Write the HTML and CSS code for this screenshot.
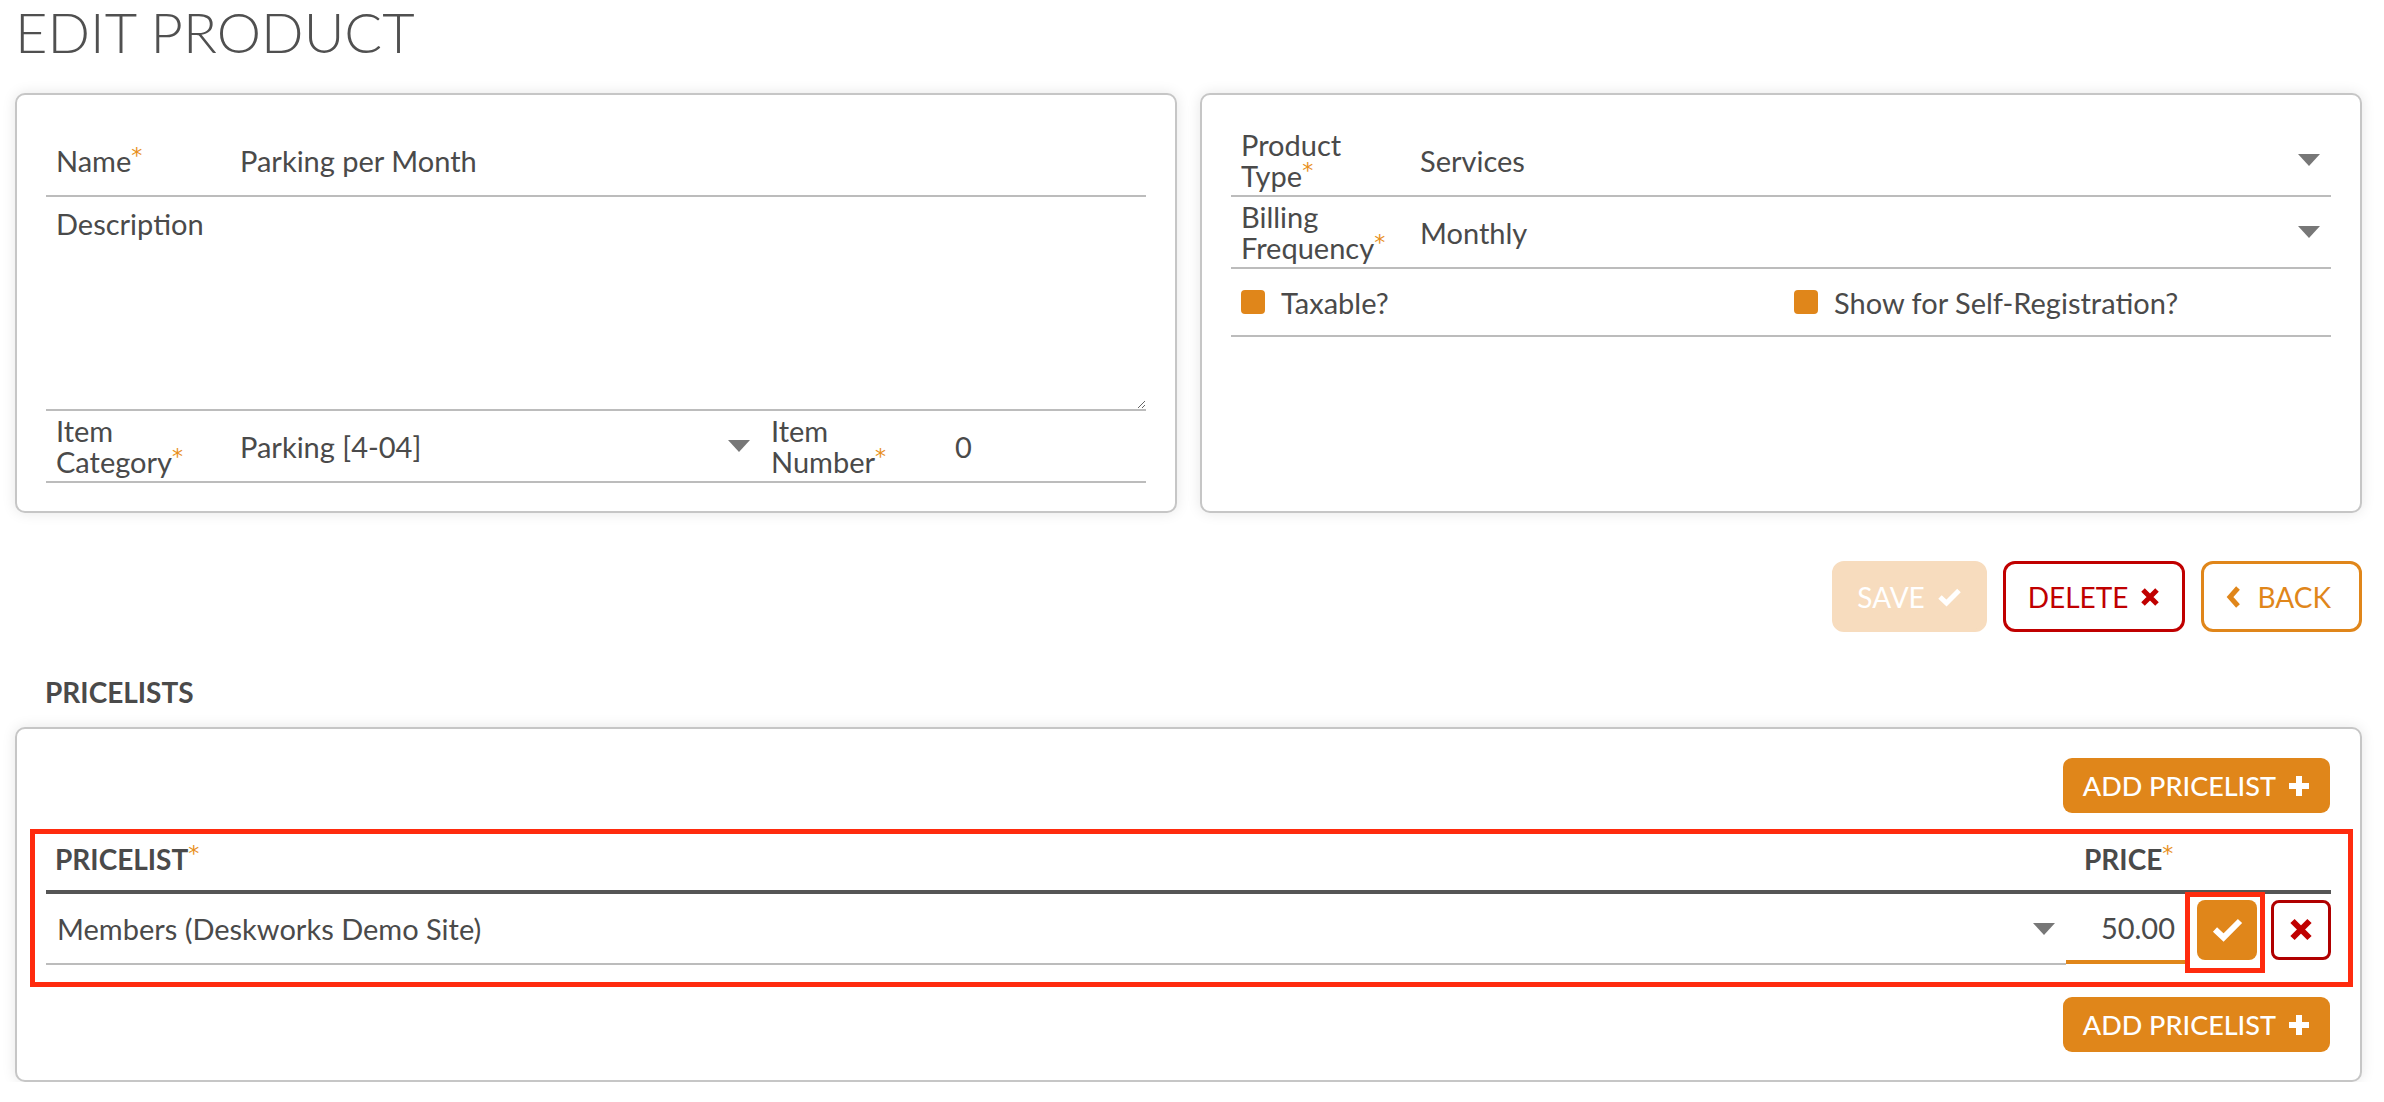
FILE: index.html
```html
<!DOCTYPE html>
<html lang="en">
  <head>
    <meta charset="UTF-8" />
    <meta name="viewport" content="width=device-width, initial-scale=1.0" />
    <title>Edit Product</title>
    <link rel="stylesheet" href="styles.css">
  </head>
  <body>
    <h1 class="page-title">EDIT PRODUCT</h1>

    <div class="top-grid">
      <div class="panel">
        <div class="field-row">
          <label class="field-label">Name<span class="req">*</span></label>
          <div class="field-value">Parking per Month</div>
        </div>
        <div class="field-row field-row-text">
          <label class="field-label">Description</label>
          <textarea class="field-textarea"></textarea>
        </div>
        <div class="field-row">
          <div class="field field-category">
            <label class="field-label">Item<br>Category<span class="req">*</span></label>
            <div class="field-value">Parking [4-04]</div>
            <span class="caret"></span>
          </div>
          <div class="field field-number">
            <label class="field-label">Item<br>Number<span class="req">*</span></label>
            <div class="field-value">0</div>
          </div>
        </div>
      </div>

      <div class="panel panel-side">
        <div class="field-row">
          <label class="field-label">Product<br>Type<span class="req">*</span></label>
          <div class="field-value">Services</div>
          <span class="caret"></span>
        </div>
        <div class="field-row">
          <label class="field-label">Billing<br>Frequency<span class="req">*</span></label>
          <div class="field-value">Monthly</div>
          <span class="caret"></span>
        </div>
        <div class="field-row check-row">
          <label class="check"><span class="check-box"></span>Taxable?</label>
          <label class="check"><span class="check-box"></span>Show for Self-Registration?</label>
        </div>
      </div>
    </div>

    <div class="actions">
      <button class="btn btn-save">SAVE
        <svg width="25" height="20" viewBox="0 0 25 20"><path d="M3 10 L9.5 16 L22 3.5" fill="none" stroke="currentColor" stroke-width="5"/></svg>
      </button>
      <button class="btn btn-delete">DELETE
        <svg width="20" height="20" viewBox="0 0 20 20"><path d="M3 3 L17 17 M17 3 L3 17" fill="none" stroke="currentColor" stroke-width="5"/></svg>
      </button>
      <button class="btn btn-back">
        <svg width="15" height="24" viewBox="0 0 15 24"><path d="M12 3 L4 12 L12 21" fill="none" stroke="currentColor" stroke-width="5"/></svg>
        BACK
      </button>
    </div>

    <h2 class="section-title">PRICELISTS</h2>
    <div class="panel panel-pricelists">
      <div class="toolbar">
        <button class="btn-add">ADD PRICELIST
          <svg width="22" height="22" viewBox="0 0 22 22"><path d="M11 1 V21 M1 11 H21" fill="none" stroke="currentColor" stroke-width="6"/></svg>
        </button>
      </div>

      <div class="highlight">
        <div class="pl-head">
          <div class="pl-head-name">PRICELIST<span class="req">*</span></div>
          <div class="pl-head-price">PRICE<span class="req">*</span></div>
        </div>
        <div class="pl-row">
          <div class="pl-select">Members (Deskworks Demo Site)<span class="caret"></span></div>
          <div class="pl-price">50.00</div>
          <button class="icon-btn icon-btn-ok">
            <svg width="31" height="25" viewBox="0 0 31 25"><path d="M3 12.5 L11.5 20.5 L28 4" fill="none" stroke="currentColor" stroke-width="6"/></svg>
          </button>
          <button class="icon-btn icon-btn-cancel">
            <svg width="24" height="23" viewBox="0 0 24 23"><path d="M3.5 3 L20.5 20 M20.5 3 L3.5 20" fill="none" stroke="currentColor" stroke-width="6"/></svg>
          </button>
        </div>
      </div>

      <div class="toolbar toolbar-bottom">
        <button class="btn-add">ADD PRICELIST
          <svg width="22" height="22" viewBox="0 0 22 22"><path d="M11 1 V21 M1 11 H21" fill="none" stroke="currentColor" stroke-width="6"/></svg>
        </button>
      </div>
    </div>
  </body>
</html>
```

FILE: styles.css
```css
/* Edit product page */
body {
  margin: 0;
  padding: 0 22px 0 15px;
  font-family: Lato, "Open Sans", sans-serif;
  font-size: 29px;
  color: #4a4a4a;
  background: #fff;
}

button {
  font-family: inherit;
  cursor: pointer;
}

.page-title {
  margin: 0 0 29px 0;
  font-size: 56px;
  font-weight: 300;
  line-height: 64px;
  color: #505050;
}

.req {
  color: #e8901c;
  font-family: "DejaVu Sans", sans-serif;
  font-size: 22px;
  font-weight: 400;
  vertical-align: 9px;
  line-height: 0;
}

/* panels */
.panel {
  background: #fff;
  border: 2px solid #c6c6c6;
  border-radius: 10px;
  box-shadow: 0 0 14px rgba(0, 0, 0, 0.1);
}

.top-grid {
  display: grid;
  grid-template-columns: 1fr 1fr;
  gap: 23px;
}

.top-grid .panel {
  padding: 30px 29px 28px 29px;
}

.field-row {
  display: flex;
  align-items: center;
  min-height: 70px;
  border-bottom: 2px solid #bcbcbc;
}

.field-row-text {
  align-items: stretch;
  height: 212px;
}

.field-label {
  flex: 0 0 auto;
  width: 194px;
  padding-left: 10px;
  box-sizing: border-box;
  line-height: 31px;
}

.panel-side .field-label {
  width: 189px;
}

.field-row-text .field-label {
  padding-top: 11px;
}

.field-value {
  flex: 1;
  line-height: 31px;
}

.field-textarea {
  flex: 1;
  display: block;
  margin: 0;
  padding: 0;
  border: none;
  outline: none;
  background: transparent;
  font: inherit;
}

.field {
  display: flex;
  align-items: center;
  align-self: stretch;
}

.field-category {
  width: 715px;
}

.field-number {
  flex: 1;
}

.caret {
  flex: 0 0 auto;
  width: 0;
  height: 0;
  margin: 0 11px 0 auto;
  border-left: 11px solid transparent;
  border-right: 11px solid transparent;
  border-top: 12px solid #777;
}

.check-row {
  display: grid;
  grid-template-columns: 1fr 1fr;
  column-gap: 6px;
  min-height: 66px;
}

.check {
  display: flex;
  align-items: center;
  gap: 16px;
  padding-left: 10px;
  line-height: 31px;
}

.check-box {
  width: 24px;
  height: 24px;
  border-radius: 4px;
  background: #e0861a;
}

/* action buttons */
.actions {
  display: flex;
  justify-content: flex-end;
  gap: 16px;
  margin-top: 48px;
}

.btn {
  display: inline-flex;
  align-items: center;
  gap: 12px;
  height: 71px;
  padding: 0 22px;
  border: 3px solid transparent;
  border-radius: 12px;
  background: #fff;
  font-size: 28px;
}

.btn-save {
  background: #f7dcbe;
  border-color: #f7dcbe;
  color: #fff;
}

.btn-delete {
  border-color: #c00000;
  color: #c00000;
}

.btn-back {
  border-color: #e0861a;
  color: #e0861a;
  gap: 16px;
  padding-right: 28px;
}

/* pricelists */
.section-title {
  margin: 44px 0 19px 30px;
  font-size: 28px;
  font-weight: 700;
  line-height: 32px;
}

.panel-pricelists {
  padding: 29px 30px 28px 29px;
}

.toolbar {
  display: flex;
  justify-content: flex-end;
}

.toolbar-bottom {
  margin-top: 10px;
}

.btn-add {
  display: inline-flex;
  align-items: center;
  gap: 12px;
  height: 55px;
  padding: 0 20px;
  border: none;
  border-radius: 9px;
  background: #e0861a;
  color: #fff;
  font-size: 27px;
  font-weight: 500;
}

.highlight {
  margin: 16px -23px 0 -16px;
  padding: 0 17px 17px 11px;
  border: 5px solid #ff2b0e;
}

.pl-head {
  display: flex;
  align-items: flex-end;
  height: 56px;
  border-bottom: 4px solid #555;
  font-size: 28px;
  font-weight: 700;
  line-height: 32px;
}

.pl-head-name {
  flex: 1;
  padding: 0 0 15px 9px;
}

.pl-head-price {
  width: 265px;
  padding: 0 0 15px 18px;
  box-sizing: border-box;
}

.pl-row {
  display: flex;
  align-items: center;
  height: 71px;
}

.pl-select {
  flex: 1;
  display: flex;
  align-items: center;
  align-self: stretch;
  padding-left: 11px;
  border-bottom: 2px solid #bcbcbc;
}

.pl-price {
  width: 119px;
  height: 70px;
  align-self: flex-start;
  display: flex;
  align-items: center;
  justify-content: flex-end;
  padding-right: 10px;
  box-sizing: border-box;
  border-bottom: 4px solid #e0861a;
}

.icon-btn {
  width: 60px;
  height: 60px;
  padding: 0;
  display: flex;
  align-items: center;
  justify-content: center;
  border-radius: 8px;
}

.icon-btn-ok {
  position: relative;
  margin-left: 12px;
  border: none;
  background: #e0861a;
  color: #fff;
}

/* annotation box drawn over the save button */
.icon-btn-ok::after {
  content: "";
  position: absolute;
  left: -12px;
  top: -8px;
  width: 80px;
  height: 81px;
  border: 5px solid #ff2b0e;
  box-sizing: border-box;
}

.icon-btn-cancel {
  margin-left: 14px;
  border: 3px solid #b00000;
  background: #fff;
  color: #c00000;
}
```
